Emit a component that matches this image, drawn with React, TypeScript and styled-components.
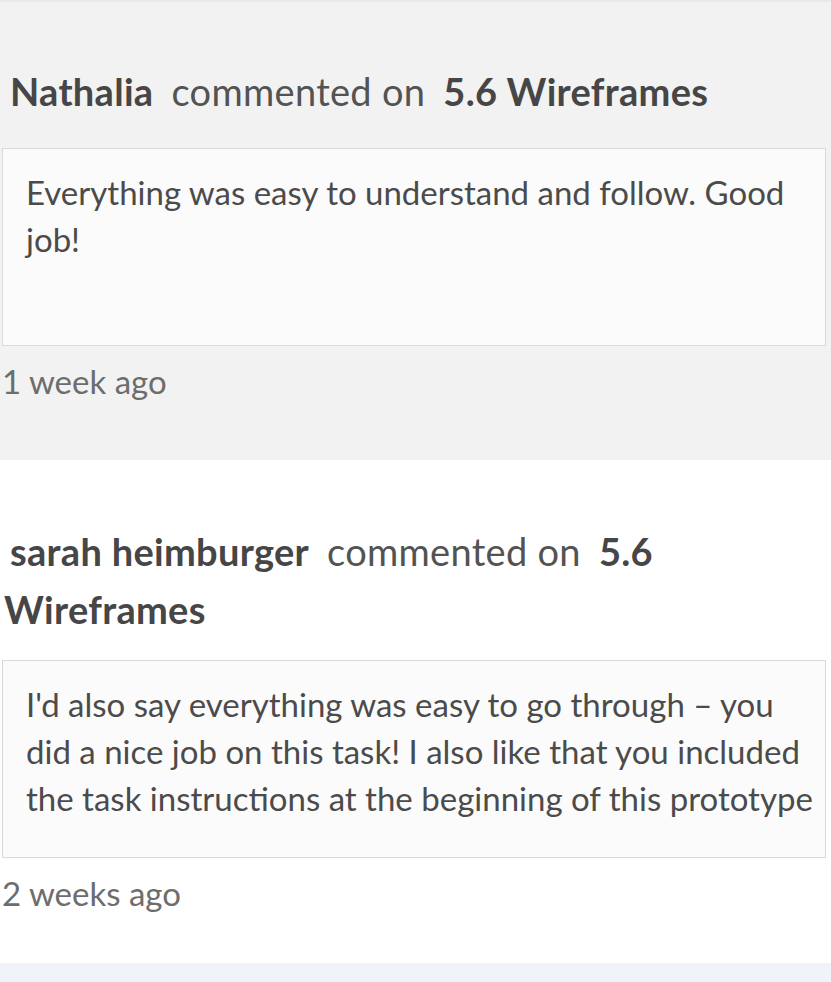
import React from "react";
import styled, { createGlobalStyle } from "styled-components";

const Global = createGlobalStyle`
  html, body { margin: 0; padding: 0; background: #ffffff; }
  body { font-family: Lato, "Open Sans", "Liberation Sans", sans-serif; -webkit-font-smoothing: antialiased; }
`;

const Page = styled.div`
  display: flex;
  flex-direction: column;
  min-height: 982px;
  overflow: hidden;
`;

const Section = styled.section<{ $bg: string; $topLine?: boolean; $bottom: number }>`
  background: ${(p) => p.$bg};
  border-top: ${(p) => (p.$topLine ? "2px solid #e9e9e9" : "none")};
  padding: ${(p) => (p.$topLine ? 60 : 62)}px 5px ${(p) => p.$bottom}px 2px;
  display: flex;
  flex-direction: column;
`;

const Heading = styled.h2<{ $gap: number }>`
  margin: 0 0 ${(p) => p.$gap}px 2px;
  font-size: 38px;
  letter-spacing: 0.3px;
  line-height: 58px;
  font-weight: 400;
  color: #535353;
`;

const Strong = styled.span`
  font-weight: 700;
  color: #464646;
`;

const Author = styled(Strong)`
  margin-left: 6px;
`;

const Verb = styled.span`
  margin: 0 8px;
`;

const Card = styled.div`
  box-sizing: border-box;
  height: 198px;
  background: #fbfbfb;
  border: 1px solid #d9d9d9;
  padding: 20px 4px 20px 23px;
  font-size: 33px;
  line-height: 47px;
  color: #4b4b4b;
`;

const Time = styled.div`
  margin-top: 12px;
  font-size: 33px;
  line-height: 47px;
  color: #6d6d6d;
`;

const Footer = styled.div`
  flex: 1;
  background: #f0f4fa;
`;

type Comment = { author: string; target: string; body: string; time: string };

const comments: Comment[] = [
  {
    author: "Nathalia",
    target: "5.6 Wireframes",
    body: "Everything was easy to understand and follow. Good job!",
    time: "1 week ago",
  },
  {
    author: "sarah heimburger",
    target: "5.6 Wireframes",
    body:
      "I'd also say everything was easy to go through \u2013 you did a nice job on this task! I also like that you included the task instructions at the beginning of this prototype",
    time: "2 weeks ago",
  },
];

export default function App() {
  return (
    <Page>
      <Global />
      {comments.map((c, i) => (
        <Section key={i} $bg={i === 0 ? "#f2f2f2" : "#ffffff"} $topLine={i === 0} $bottom={i === 0 ? 55 : 46}>
          <Heading $gap={i === 0 ? 28 : 22}>
            <Author>{c.author}</Author> <Verb>commented on</Verb> <Strong>{c.target}</Strong>
          </Heading>
          <Card>{c.body}</Card>
          <Time>{c.time}</Time>
        </Section>
      ))}
      <Footer />
    </Page>
  );
}
